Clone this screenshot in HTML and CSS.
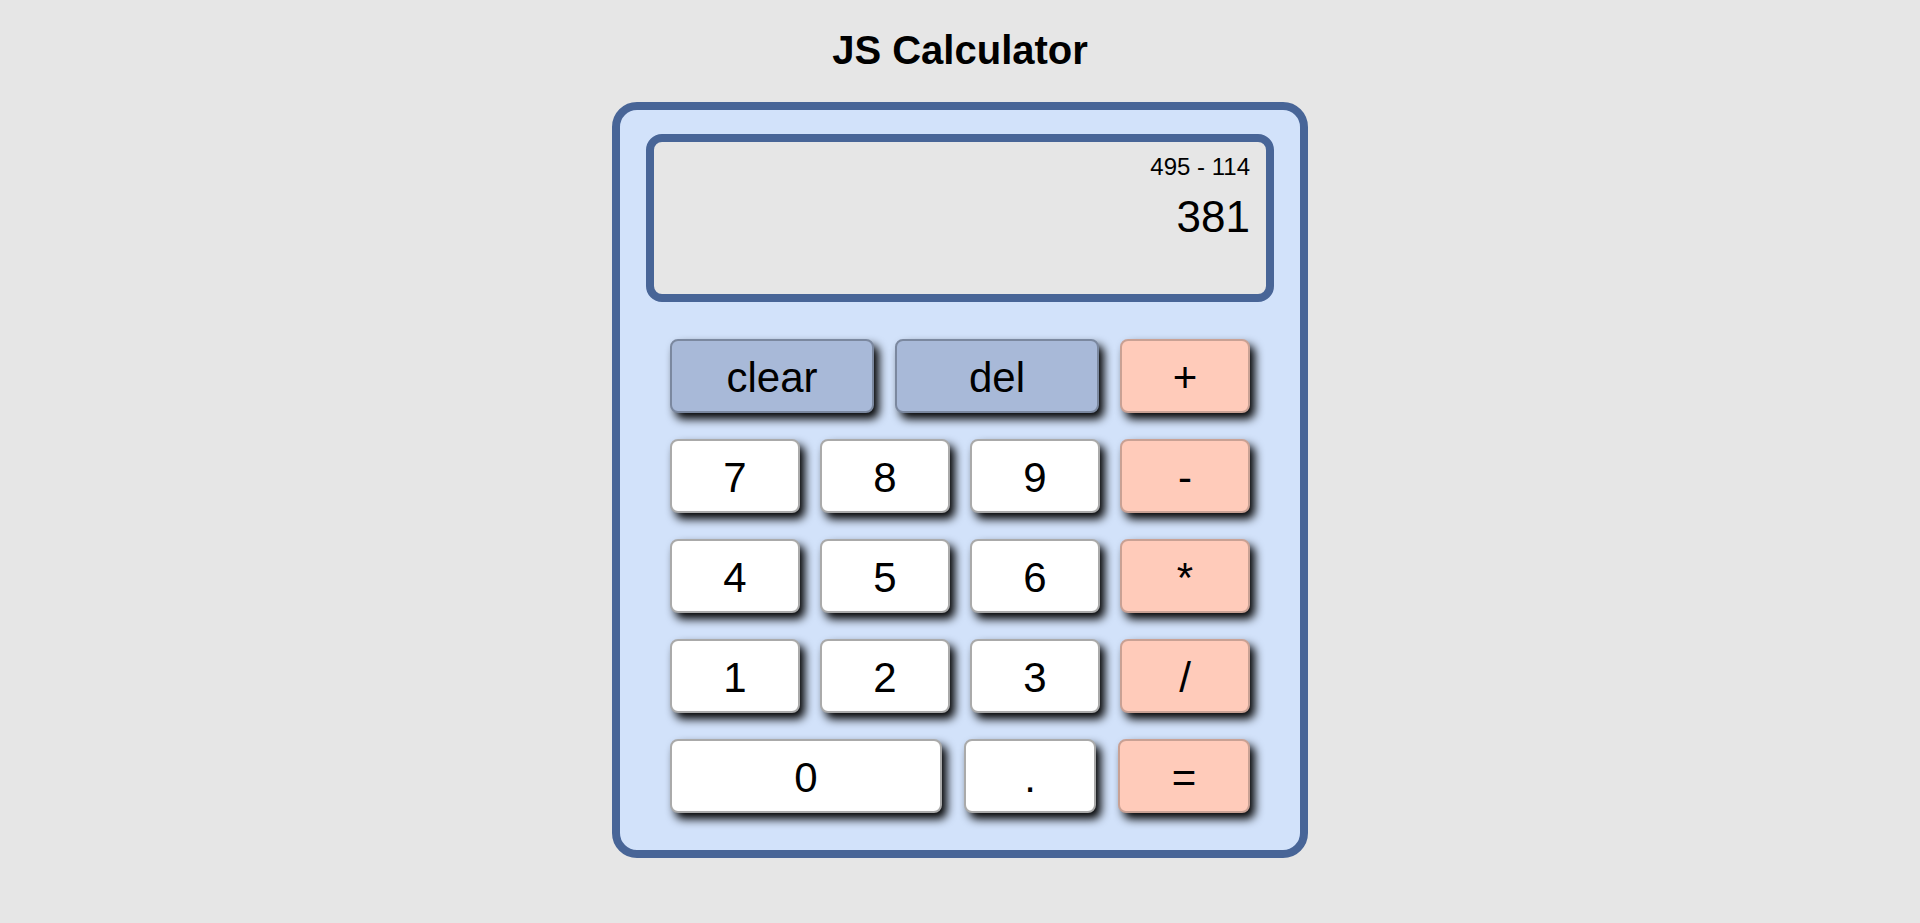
FILE: index.html
```html
<!DOCTYPE html>
<html lang="en">
<head>
    <meta charset="UTF-8">
    <meta name="viewport" content="width=device-width, initial-scale=1.0">
    <title>JS Calculator</title>
    <link rel="stylesheet" href="styles.css">
</head>
<body>

<h1 class="title">JS Calculator</h1>

<div class="calculator">
    <div class="screen">
        <div class="previous" id="previous">495 - 114</div>
        <div class="current" id="current">381</div>
    </div>

    <div class="keys">
        <div class="row">
            <button class="key func wide" onclick="clearAll()">clear</button>
            <button class="key func wide" onclick="del()">del</button>
            <button class="key op" onclick="chooseOp('+')">+</button>
        </div>
        <div class="row">
            <button class="key" onclick="addDigit('7')">7</button>
            <button class="key" onclick="addDigit('8')">8</button>
            <button class="key" onclick="addDigit('9')">9</button>
            <button class="key op" onclick="chooseOp('-')">-</button>
        </div>
        <div class="row">
            <button class="key" onclick="addDigit('4')">4</button>
            <button class="key" onclick="addDigit('5')">5</button>
            <button class="key" onclick="addDigit('6')">6</button>
            <button class="key op" onclick="chooseOp('*')">*</button>
        </div>
        <div class="row">
            <button class="key" onclick="addDigit('1')">1</button>
            <button class="key" onclick="addDigit('2')">2</button>
            <button class="key" onclick="addDigit('3')">3</button>
            <button class="key op" onclick="chooseOp('/')">/</button>
        </div>
        <div class="row">
            <button class="key zero" onclick="addDigit('0')">0</button>
            <button class="key dot" onclick="addDigit('.')">.</button>
            <button class="key op eq" onclick="equals()">=</button>
        </div>
    </div>
</div>

<script>
let previous = '495 - 114';
let current = '381';
let operand = null;
let operator = null;

function render() {
    document.getElementById('previous').innerText = previous;
    document.getElementById('current').innerText = current;
}

function addDigit(d) {
    if (d === '.' && current.includes('.')) return;
    current = (current === '0' && d !== '.') ? d : current + d;
    render();
}

function chooseOp(op) {
    if (current === '') return;
    if (operator !== null) equals();
    operand = parseFloat(current);
    operator = op;
    previous = current + ' ' + op;
    current = '';
    render();
}

function equals() {
    if (operator === null || current === '') return;
    const b = parseFloat(current);
    let result;
    switch (operator) {
        case '+': result = operand + b; break;
        case '-': result = operand - b; break;
        case '*': result = operand * b; break;
        case '/': result = operand / b; break;
    }
    previous = operand + ' ' + operator + ' ' + b;
    current = String(result);
    operator = null;
    render();
}

function clearAll() {
    previous = '';
    current = '';
    operator = null;
    render();
}

function del() {
    current = current.slice(0, -1);
    render();
}
</script>

</body>
</html>
```

FILE: styles.css
```css
body {
    font-family: "Liberation Sans", Arial, sans-serif;
    background-color: #e6e6e6;
    color: #000;
    margin: 0;
    padding: 0;
}
.title {
    text-align: center;
    font-size: 40px;
    margin: 28px 0 29px;
}
.calculator {
    box-sizing: border-box;
    width: 696px;
    margin: 0 auto;
    padding: 24px 26px 37px;
    border: 8px solid #486597;
    border-radius: 25px;
    background-color: #d2e2fa; /* Light blue */
}
.screen {
    box-sizing: border-box;
    height: 168px;
    padding: 11px 16px 0;
    border: 8px solid #486597;
    border-radius: 16px;
    background-color: #e6e6e6;
    text-align: right;
}
.previous {
    font-size: 24px;
}
.current {
    font-size: 44px;
    margin-top: 11px;
}
.keys {
    width: 580px;
    margin: 37px auto 0;
    display: flex;
    flex-direction: column;
    gap: 26px;
}
.row {
    display: flex;
    justify-content: space-between;
}
.key {
    box-sizing: border-box;
    width: 130px;
    height: 74px;
    padding: 3px 0 0;
    font-family: inherit;
    font-size: 42px;
    color: #000;
    background-color: #fff;
    border: 2px solid #aaa;
    border-radius: 8px;
    box-shadow: 5px 6px 10px #000;
    cursor: pointer;
}
.func {
    background-color: #a8b9d8; /* Grey blue */
    border-color: #7b889f;
}
.op {
    background-color: #ffcbba; /* Peach */
    border-color: #c9a194;
}
.wide {
    width: 204px;
}
.zero {
    width: 272px;
}
.dot,
.eq {
    width: 132px;
}
```
